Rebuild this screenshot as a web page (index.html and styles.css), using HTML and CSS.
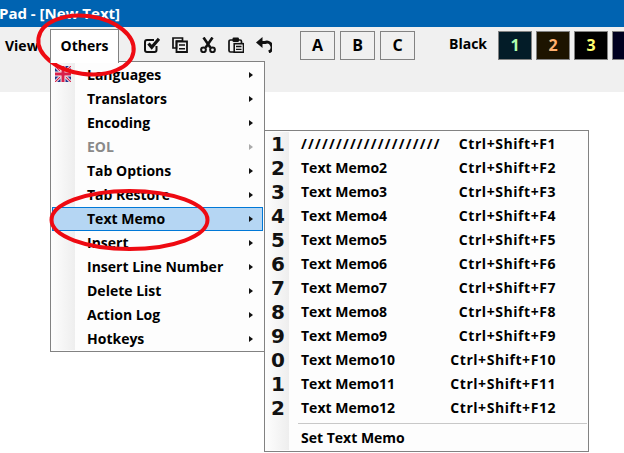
FILE: index.html
```html
<!DOCTYPE html>
<html lang="en">
<head>
<meta charset="utf-8">
<title>Pad - [New Text]</title>
<link rel="stylesheet" href="styles.css">
</head>
<body>
<div class="app">
  <header class="titlebar">Pad - [New Text]</header>
  <div class="toolbar">
    <span class="menu-label">View</span>
    <span class="tab">Others</span>
    <div class="icons">
      <svg class="icon" viewBox="0 0 16 16"><path d="M12.500 9v4a2 2 0 0 1-2 2H3a2 2 0 0 1-2-2V5a2 2 0 0 1 2-2h7" fill="none" stroke="#111" stroke-width="2"/><path d="M4.500 6.500l3.200 3.800L15 1.800" fill="none" stroke="#111" stroke-width="3.200"/></svg>
      <svg class="icon" viewBox="0 0 16 16"><path d="M1 1h9.500v3H4.500v7H1z" fill="none" stroke="#111" stroke-width="1.700"/><path d="M4.500 4.500h10.500v10.500H4.500z" fill="none" stroke="#111" stroke-width="1.800"/><path d="M7 8h6M7 11.800h6" stroke="#111" stroke-width="1.500"/></svg>
      <svg class="icon" viewBox="0 0 16 16"><path d="M3.500 0.500l6.800 10M12.500 0.500L5.700 10.500" stroke="#111" stroke-width="2.600" fill="none"/><circle cx="3.500" cy="12.800" r="2.400" fill="none" stroke="#111" stroke-width="2"/><circle cx="12.500" cy="12.800" r="2.400" fill="none" stroke="#111" stroke-width="2"/></svg>
      <svg class="icon" viewBox="0 0 16 16"><path d="M5 3H2.500A1.500 1.500 0 0 0 1 4.500v9A1.500 1.500 0 0 0 2.500 15H6M11 3h1A1.500 1.500 0 0 1 13.500 4.500V6" fill="none" stroke="#111" stroke-width="1.700"/><rect x="4.500" y="0.500" width="6.500" height="4.500" rx="1.200" fill="#111"/><rect x="6.200" y="6.700" width="9.300" height="8.500" fill="#f0f0f0" stroke="#111" stroke-width="1.600"/><path d="M8 9.500h5.500M8 12.400h5.500" stroke="#111" stroke-width="1.400"/></svg>
      <svg class="icon" viewBox="0 0 16 16"><path d="M0 5.500L6.500 0v11z" fill="#111"/><path d="M5 5.500h4a5 5 0 0 1 3.800 9.500" fill="none" stroke="#111" stroke-width="3"/></svg>
    </div>
    <div class="letters">
      <span class="letter">A</span>
      <span class="letter">B</span>
      <span class="letter">C</span>
    </div>
    <span class="theme-name">Black</span>
    <div class="swatches">
      <span class="swatch s1">1</span>
      <span class="swatch s2">2</span>
      <span class="swatch s3">3</span>
      <span class="swatch s4">4</span>
    </div>
  </div>
  <main class="editor"></main>

  <div class="menu main-menu">
    <div class="item"><svg class="flag" viewBox="0 0 16 16"><rect width="16" height="16" fill="#22348c"/><path d="M0 0l16 16M16 0L0 16" stroke="#f2f2f2" stroke-width="3"/><path d="M0 0l16 16M16 0L0 16" stroke="#d8204a" stroke-width="1.200"/><path d="M8 0v16M0 8h16" stroke="#f2f2f2" stroke-width="5"/><path d="M8 0v16M0 8h16" stroke="#d8204a" stroke-width="3"/></svg><span>Languages</span><i class="arrow"></i></div>
    <div class="item"><span>Translators</span><i class="arrow"></i></div>
    <div class="item"><span>Encoding</span><i class="arrow"></i></div>
    <div class="item disabled"><span>EOL</span><i class="arrow"></i></div>
    <div class="item"><span>Tab Options</span><i class="arrow"></i></div>
    <div class="item"><span>Tab Restore</span><i class="arrow"></i></div>
    <div class="item active"><span>Text Memo</span><i class="arrow"></i></div>
    <div class="item"><span>Insert</span><i class="arrow"></i></div>
    <div class="item"><span>Insert Line Number</span><i class="arrow"></i></div>
    <div class="item"><span>Delete List</span><i class="arrow"></i></div>
    <div class="item"><span>Action Log</span><i class="arrow"></i></div>
    <div class="item"><span>Hotkeys</span><i class="arrow"></i></div>
  </div>

  <div class="menu sub-menu">
    <div class="item"><b class="num">1</b><span class="slashes">////////////////////</span><kbd>Ctrl+Shift+F1</kbd></div>
    <div class="item"><b class="num">2</b><span>Text Memo2</span><kbd>Ctrl+Shift+F2</kbd></div>
    <div class="item"><b class="num">3</b><span>Text Memo3</span><kbd>Ctrl+Shift+F3</kbd></div>
    <div class="item"><b class="num">4</b><span>Text Memo4</span><kbd>Ctrl+Shift+F4</kbd></div>
    <div class="item"><b class="num">5</b><span>Text Memo5</span><kbd>Ctrl+Shift+F5</kbd></div>
    <div class="item"><b class="num">6</b><span>Text Memo6</span><kbd>Ctrl+Shift+F6</kbd></div>
    <div class="item"><b class="num">7</b><span>Text Memo7</span><kbd>Ctrl+Shift+F7</kbd></div>
    <div class="item"><b class="num">8</b><span>Text Memo8</span><kbd>Ctrl+Shift+F8</kbd></div>
    <div class="item"><b class="num">9</b><span>Text Memo9</span><kbd>Ctrl+Shift+F9</kbd></div>
    <div class="item"><b class="num">0</b><span>Text Memo10</span><kbd>Ctrl+Shift+F10</kbd></div>
    <div class="item"><b class="num">1</b><span>Text Memo11</span><kbd>Ctrl+Shift+F11</kbd></div>
    <div class="item"><b class="num">2</b><span>Text Memo12</span><kbd>Ctrl+Shift+F12</kbd></div>
    <div class="separator"></div>
    <div class="item"><span>Set Text Memo</span></div>
  </div>

  <svg class="annotations" viewBox="0 0 624 453">
    <ellipse cx="86" cy="45" rx="48" ry="29" transform="rotate(8 86 45)"/>
    <ellipse cx="129.500" cy="220" rx="78" ry="29"/>
  </svg>
</div>
</body>
</html>
```

FILE: styles.css
```css
* { box-sizing: border-box; }
html, body { margin: 0; padding: 0; height: 100%; overflow: hidden; }
body { font-family: "Open Sans", "Noto Sans", sans-serif; font-size: 14px; font-weight: 700; color: #000; background: #fff; }

.app { position: relative; width: 624px; height: 453px; overflow: hidden; display: flex; flex-direction: column; }

.titlebar { height: 27px; flex: none; background: #0063b1; color: #fff; font-size: 15px; font-weight: 700; line-height: 26px; text-indent: -1px; white-space: nowrap; }

.toolbar { height: 65px; flex: none; background: #f0f0f0; display: flex; align-items: flex-start; padding: 2px 0 0 5px; }
.toolbar > * { flex: none; }
.menu-label { width: 45px; height: 33px; line-height: 33px; }
.tab { width: 69px; height: 34px; background: #fff; border: 1px solid #828282; border-bottom: 0; text-align: center; line-height: 31px; position: relative; z-index: 1; }

.icons { display: flex; gap: 12px; margin: 8px 0 0 25px; }
.icon { width: 16px; height: 16px; display: block; }

.letters { display: flex; gap: 5px; margin: 2px 0 0 28px; }
.letter { width: 35px; height: 29px; border: 1px solid #828282; text-align: center; line-height: 27px; font-size: 16px; }

.theme-name { margin-left: 34px; height: 33px; line-height: 30px; width: 49px; }
.swatches { display: flex; gap: 4px; margin-top: 2px; }
.swatch { width: 34px; height: 29px; flex: none; border: 1px solid #828282; text-align: center; line-height: 27px; font-size: 16px; }
.s1 { background: #031c28; color: #b0ffb0; }
.s2 { background: #1d1400; color: #ffb070; }
.s3 { background: #000; color: #ffff70; }
.s4 { background: #000020; color: #80a0ff; }

.editor { flex: 1; background: #fff; }

.menu { position: absolute; background: #fdfdfd; border: 1px solid #828282; padding: 1px; }
.menu::before { content: ""; position: absolute; left: 1px; top: 1px; bottom: 1px; width: 23px; background: linear-gradient(to right, #fdfdfd, #eeeeee); }
.main-menu { left: 50px; top: 61px; width: 215px; height: 291px; }
.sub-menu { left: 264px; top: 130px; width: 325px; height: 322px; }

.item { position: relative; height: 24px; line-height: 24px; display: flex; align-items: center; padding-left: 35px; white-space: nowrap; }
.main-menu .item.active { background: #b5d6f3; outline: 1px solid #0078d7; outline-offset: -1px; }
.item.disabled { color: #8a8a8a; }
.arrow { position: absolute; left: 197px; top: 9px; width: 0; height: 0; border-left: 4px solid #111; border-top: 3.500px solid transparent; border-bottom: 3.500px solid transparent; }
.disabled .arrow { border-left-color: #aaa; }
.flag { position: absolute; left: 3px; top: 3px; width: 16px; height: 16px; }

.num { position: absolute; left: 3px; top: 0; width: 18px; text-align: center; font-family: "DejaVu Sans", sans-serif; font-size: 20px; font-weight: 700; line-height: 24px; color: #111; }
.slashes { letter-spacing: 1.200px; }
kbd { position: absolute; right: 31px; top: 0; font: inherit; line-height: 24px; letter-spacing: 0.550px; }

.separator { height: 1px; margin: 3px 0 2px 32px; background: #c8c8c8; }

.annotations { position: absolute; inset: 0; width: 624px; height: 453px; pointer-events: none; }
.annotations ellipse { fill: none; stroke: #ee0a12; stroke-width: 4; }
```
